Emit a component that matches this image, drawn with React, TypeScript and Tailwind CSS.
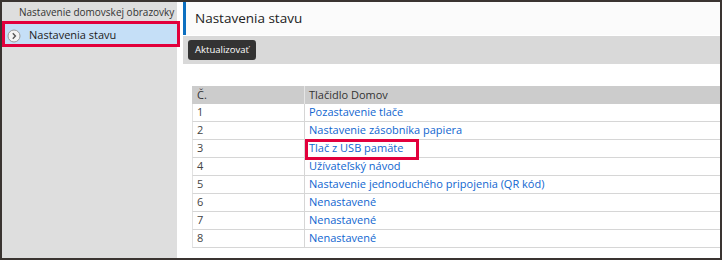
import React from "react";

const rows: [string, string][] = [
  ["1", "Pozastavenie tlače"],
  ["2", "Nastavenie zásobníka papiera"],
  ["3", "Tlač z USB pamäte"],
  ["4", "Užívateľský návod"],
  ["5", "Nastavenie jednoduchého pripojenia (QR kód)"],
  ["6", "Nenastavené"],
  ["7", "Nenastavené"],
  ["8", "Nenastavené"],
];

export default function App() {
  return (
    <div
      className="relative w-[722px] h-[260px] bg-white overflow-hidden"
      style={{ fontFamily: '"Open Sans", "Noto Sans", sans-serif' }}
    >
      <div className="absolute inset-0 border-2 border-[#3a3431] z-20 pointer-events-none" />
      <div className="flex h-full pt-[2px] pl-[2px]">
        {/* Sidebar */}
        <div className="w-[175px] h-full bg-[#dedede] flex flex-col">
          <div className="h-[20px] pl-[17px] flex items-center text-[10px] text-[#333] whitespace-nowrap">
            Nastavenie domovskej obrazovky
          </div>
          <div className="mt-[2px] h-[23px] bg-[#c5dff7] flex items-center pl-[5px] text-[11px] text-[#222]">
            <svg width="14" height="14" viewBox="0 0 14 14" className="mr-[8px]">
              <circle cx="7" cy="7" r="6" fill="#f4f4f4" stroke="#9a9a9a" strokeWidth="1" />
              <path d="M5.8 4.3 L8.4 7 L5.8 9.7" fill="none" stroke="#555" strokeWidth="1.4" />
            </svg>
            Nastavenia stavu
          </div>
        </div>
        {/* Main */}
        <div className="flex-1 ml-[6px] flex flex-col">
          <div className="h-[33px] bg-[#fbfbfb] border-l-[3px] border-[#0c6fc0] flex items-center pl-[9px] text-[13.5px] text-[#222]">
            Nastavenia stavu
          </div>
          <div className="h-[28px] mt-[1px] bg-[#d9d9d9] flex items-center pl-[5px]">
            <div className="h-[20px] px-[7px] rounded-[3px] bg-[#333333] text-white text-[9.5px] flex items-center">
              Aktualizovať
            </div>
          </div>
          <div className="mt-[22px] ml-[9px]">
            <div className="flex h-[18px] bg-[#cccccc] text-[11px] text-[#333]">
              <div className="w-[113px] pl-[5px] flex items-center border-r border-[#e6e6e6]">Č.</div>
              <div className="flex-1 pl-[4px] flex items-center">Tlačidlo Domov</div>
            </div>
            {rows.map(([n, label]) => (
              <div key={n} className="flex h-[18px] text-[11px] border-b border-[#d6d6d6] border-l border-l-[#e2e2e2]">
                <div className="w-[112px] pl-[4px] flex items-center text-[#444] border-r border-[#d6d6d6]">{n}</div>
                <div className="flex-1 pl-[4px] flex items-center text-[#1066d0] whitespace-nowrap">{label}</div>
              </div>
            ))}
          </div>
        </div>
      </div>
      {/* Annotation highlights */}
      <div className="absolute left-[2px] top-[21px] w-[178px] h-[26px] border-[3px] border-[#e2003c] z-30" />
      <div className="absolute left-[305px] top-[139px] w-[114px] h-[21px] border-[3px] border-[#e2003c] z-30" />
    </div>
  );
}
